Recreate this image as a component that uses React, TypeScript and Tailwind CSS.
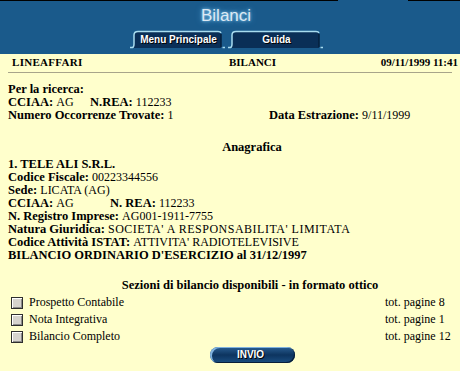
import React from 'react';

const Tab: React.FC<{ label: string }> = ({ label }) => (
    <div className="relative w-[95px] h-[19px] flex items-center justify-center">
        <svg className="absolute inset-0" width="95" height="19" viewBox="0 0 95 19">
            <path d="M4 18 L4 5 Q4 1.5 8 1.5 L88 1.5 Q91 1.5 91 4 L91 18 Z" fill="#0a2f57" />
            <path d="M91 4 L91 17" stroke="#05203d" strokeWidth="1.5" />
            <path
                d="M0 17.5 L2.5 17.5 Q4 17 4 14 L4 5 Q4 1.5 8 1.5 L88 1.5 Q90.5 1.5 91 3"
                fill="none"
                stroke="#a8dcef"
                strokeWidth="1.5"
            />
            <path d="M92.5 17.5 L95 17.5" stroke="#a8dcef" strokeWidth="1.5" />
        </svg>
        <span className="relative pl-[2px] font-['Liberation_Sans',sans-serif] text-[10px] font-bold text-white leading-none [text-shadow:1px_1px_0_#000]">
            {label}
        </span>
    </div>
);

const Checkbox: React.FC = () => (
    <span className="inline-block w-[12px] h-[12px] border border-[#2e2e2e] bg-[#d6d3ce] shadow-[inset_1px_1px_0_#ffffff,inset_-1px_-1px_0_#8a8a8a]" />
);

const sezioni = [
    { name: 'Prospetto Contabile', pages: 8 },
    { name: 'Nota Integrativa', pages: 1 },
    { name: 'Bilancio Completo', pages: 12 },
];

export default function App() {
    return (
        <div className="w-[460px] h-[371px] overflow-hidden bg-[#ffffcc] text-black font-['Liberation_Serif',serif]">
            {/* header */}
            <div className="h-[54px] bg-[#1a5a8b]">
                <div className="flex h-px">
                    <div className="w-[338px] bg-black" />
                    <div className="w-[70px]" />
                    <div className="flex-1 bg-black" />
                </div>
                <div className="mt-[4px] pl-[201px] h-[22px] leading-[22px] font-['Liberation_Sans',sans-serif] text-[17px] text-[#dde9f4] [text-shadow:0_0_3px_#8fd0f2,0_0_6px_#4f9fd6]">
                    Bilanci
                </div>
                <div className="mt-[3px] flex gap-[3px] pl-[130px]">
                    <Tab label="Menu Principale" />
                    <Tab label="Guida" />
                </div>
            </div>

            {/* top row */}
            <div className="pt-[2px] grid grid-cols-[217px_1fr_auto] pl-3 pr-[2px] text-[11px] font-bold leading-[13px]">
                <span className="tracking-[0.3px]">LINEAFFARI</span>
                <span>BILANCI</span>
                <span>09/11/1999 11:41</span>
            </div>
            <div className="mt-[3px] mx-2 border-t border-[#a8a58a]" />

            {/* ricerca */}
            <div className="mt-[10px] pl-2 text-[12.5px] leading-[13px] font-bold">
                <div>Per la ricerca:</div>
                <div className="flex">
                    <span className="w-[82px]">
                        CCIAA: <span className="text-[12px] font-normal">AG</span>
                    </span>
                    <span>
                        N.REA: <span className="text-[12px] font-normal">112233</span>
                    </span>
                </div>
                <div className="grid grid-cols-[261px_1fr]">
                    <span>
                        Numero Occorrenze Trovate: <span className="text-[12px] font-normal">1</span>
                    </span>
                    <span>
                        Data Estrazione: <span className="text-[12px] font-normal">9/11/1999</span>
                    </span>
                </div>
            </div>

            {/* anagrafica */}
            <div className="mt-[19px] pl-[44px] text-center text-[12.5px] leading-[13px] font-bold">Anagrafica</div>
            <div className="mt-[4px] pl-2 text-[12.5px] leading-[13px] font-bold">
                <div>1. TELE ALI S.R.L.</div>
                <div>
                    Codice Fiscale: <span className="text-[12px] font-normal">00223344556</span>
                </div>
                <div>
                    Sede: <span className="text-[12px] font-normal">LICATA (AG)</span>
                </div>
                <div className="flex">
                    <span className="w-[102px]">
                        CCIAA: <span className="text-[12px] font-normal">AG</span>
                    </span>
                    <span>
                        N. REA: <span className="text-[12px] font-normal">112233</span>
                    </span>
                </div>
                <div>
                    N. Registro Imprese: <span className="text-[12px] font-normal">AG001-1911-7755</span>
                </div>
                <div>
                    Natura Giuridica:{' '}
                    <span className="text-[12px] font-normal tracking-[0.5px]">SOCIETA' A RESPONSABILITA' LIMITATA</span>
                </div>
                <div>
                    Codice Attività ISTAT:{' '}
                    <span className="text-[12px] font-normal">ATTIVITA' RADIOTELEVISIVE</span>
                </div>
                <div>BILANCIO ORDINARIO D'ESERCIZIO al 31/12/1997</div>
            </div>

            {/* sezioni */}
            <div className="mt-[17px] pl-[40px] text-center text-[12.5px] leading-[13px] font-bold">
                Sezioni di bilancio disponibili - in formato ottico
            </div>
            <div className="mt-[2px] pl-[11px] text-[12px]">
                {sezioni.map((s) => (
                    <div key={s.name} className="grid grid-cols-[374px_1fr] h-[17px] leading-[17px] items-center">
                        <div className="flex items-center gap-[6px]">
                            <Checkbox />
                            <span>{s.name}</span>
                        </div>
                        <span>tot. pagine {s.pages}</span>
                    </div>
                ))}
            </div>

            <div className="mt-[2px] ml-[210px]">
                <button className="w-[85px] h-[16px] rounded-full bg-gradient-to-b from-[#2a5f92] via-[#0d345f] to-[#1b4f82] shadow-[inset_2px_1px_0_#7fb2df,inset_-1px_-1px_0_#081f3a] flex items-center justify-center pr-[4px] font-['Liberation_Sans',sans-serif] text-[10px] font-bold text-white leading-none [text-shadow:1px_1px_0_#000]">
                    INVIO
                </button>
            </div>
        </div>
    );
}
